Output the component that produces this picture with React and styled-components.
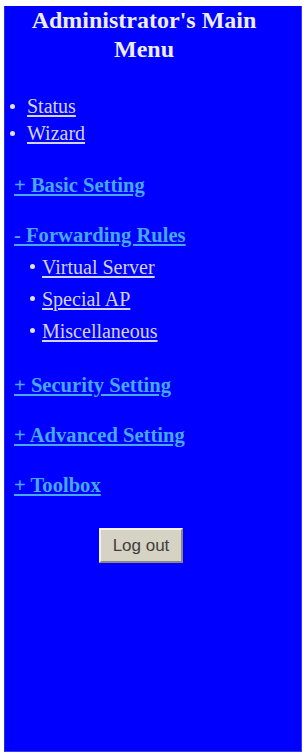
import React from "react";
import styled, { createGlobalStyle } from "styled-components";

const Global = createGlobalStyle`
  html, body { margin: 0; padding: 0; background: #ffffff; }
  body { font-family: "Liberation Serif", "Times New Roman", serif; }
`;

const Page = styled.div`
  padding: 6px 4px 4px 4px;
  width: 306px;
  height: 756px;
  box-sizing: border-box;
`;

const Panel = styled.nav`
  background: #0000ff;
  height: 746px;
  width: 298px;
  box-sizing: border-box;
  box-shadow: inset 1px 0 0 #2a2ad8, inset -1px -1px 0 #3a3af0;
  display: flex;
  flex-direction: column;
`;

const Title = styled.h1`
  margin: 0;
  padding: 0 18px 0 0;
  font-family: "Liberation Serif", serif;
  font-weight: bold;
  font-size: 24px;
  line-height: 29px;
  color: #ececfa;
  text-align: center;
`;

const List = styled.ul`
  list-style: none;
  margin: ${(p) => p.$mt || 0}px 0 0 0;
  padding: 0 0 0 ${(p) => p.$indent}px;
  display: flex;
  flex-direction: column;
`;

const Item = styled.li`
  position: relative;
  font-size: 20px;
  line-height: ${(p) => p.$lh}px;
  padding-left: ${(p) => p.$gap}px;
  &::before {
    content: "";
    position: absolute;
    left: 0;
    top: ${(p) => p.$lh / 2 - 3}px;
    width: 5px;
    height: 5px;
    border-radius: 50%;
    background: #e0e0f0;
  }
`;

const ItemLink = styled.a`
  color: #d4d4e6;
  text-decoration: underline;
  text-underline-offset: 2px;
`;

const Section = styled.div`
  margin-top: ${(p) => p.$mt}px;
  padding-left: 10px;
`;

const Heading = styled.a`
  display: inline-block;
  font-weight: bold;
  font-size: 20.6px;
  line-height: 24px;
  color: #46a8ff;
  text-decoration: underline;
  text-underline-offset: 2px;
`;

const ButtonRow = styled.div`
  display: flex;
  justify-content: center;
  padding-right: 24px;
  margin-top: 31px;
`;

const LogoutButton = styled.button`
  width: 84px;
  height: 35px;
  background: #d6d2c4;
  border: 2px solid;
  border-color: #f4f2ea #8a8880 #8a8880 #f4f2ea;
  font-family: "Liberation Sans", Arial, sans-serif;
  font-size: 17px;
  color: #3e3e3e;
  padding: 0;
`;

export default function App() {
  return (
    <>
      <Global />
      <Page>
        <Panel>
          <Title>
            Administrator's Main
            <br />
            Menu
          </Title>
          <List $indent={6} $mt={29}>
            <Item $lh={27} $gap={17}>
              <ItemLink href="#">Status</ItemLink>
            </Item>
            <Item $lh={27} $gap={17}>
              <ItemLink href="#">Wizard</ItemLink>
            </Item>
          </List>
          <Section $mt={26}>
            <Heading href="#">+ Basic Setting</Heading>
          </Section>
          <Section $mt={26}>
            <Heading href="#">- Forwarding Rules</Heading>
            <List $indent={16} $mt={4}>
              <Item $lh={32} $gap={12}>
                <ItemLink href="#">Virtual Server</ItemLink>
              </Item>
              <Item $lh={32} $gap={12}>
                <ItemLink href="#">Special AP</ItemLink>
              </Item>
              <Item $lh={32} $gap={12}>
                <ItemLink href="#">Miscellaneous</ItemLink>
              </Item>
            </List>
          </Section>
          <Section $mt={26}>
            <Heading href="#">+ Security Setting</Heading>
          </Section>
          <Section $mt={26}>
            <Heading href="#">+ Advanced Setting</Heading>
          </Section>
          <Section $mt={26}>
            <Heading href="#">+ Toolbox</Heading>
          </Section>
          <ButtonRow>
            <LogoutButton type="button">Log out</LogoutButton>
          </ButtonRow>
        </Panel>
      </Page>
    </>
  );
}
